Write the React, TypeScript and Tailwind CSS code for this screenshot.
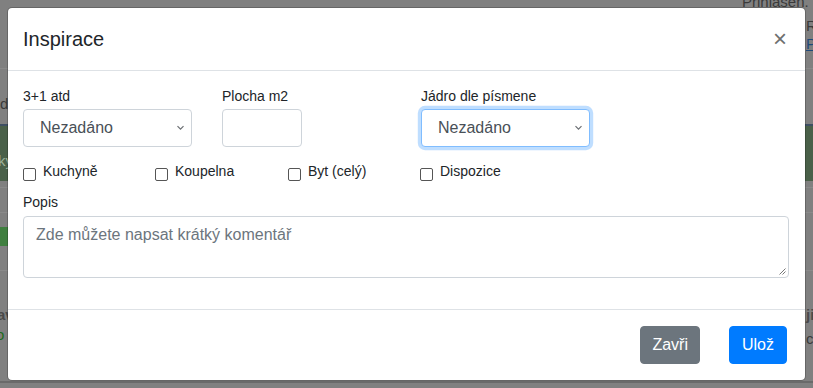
import React from "react";

function Chevron() {
  return (
    <svg width="9" height="6" viewBox="0 0 9 6" className="block">
      <polyline points="1.5,1.2 4.5,4.2 7.5,1.2" fill="none" stroke="#6b6f73" strokeWidth="1.2" />
    </svg>
  );
}

function SelectBox({ focused }: { focused?: boolean }) {
  return (
    <div
      className={
        "w-[169px] h-[38px] rounded-[4px] border bg-white flex items-center justify-between pl-[16px] pr-[6px] text-[16px] text-[#495057] " +
        (focused
          ? "border-[#80bdff] shadow-[0_0_0_3.2px_rgba(0,123,255,0.25)]"
          : "border-[#ced4da]")
      }
    >
      <span className="leading-[24px]">Nezadáno</span>
      <Chevron />
    </div>
  );
}

function Check({ label, w }: { label: string; w: string }) {
  return (
    <div className={"flex items-start " + w}>
      <div className="w-[13px] h-[13px] mt-[6px] border border-[#555] rounded-[2px] bg-white shrink-0" />
      <span className="ml-[7px] text-[14px] leading-[18px] text-[#212529]">{label}</span>
    </div>
  );
}

export default function App() {
  return (
    <div className="relative w-[813px] h-[388px] overflow-hidden bg-[#808080] font-['Liberation_Sans',Arial,sans-serif]">
      {/* dimmed page behind the backdrop */}
      <div className="absolute left-[742px] top-[-9px] text-[15px] text-[#3a3a3a]">Přihlášen.</div>
      <div className="absolute left-[806px] top-[15px] text-[15px] text-[#3a3a3a]">Ra</div>
      <div className="absolute left-[806px] top-[33px] text-[15px] text-[#1f4a7a] underline">Po</div>
      <div className="absolute left-0 top-[68px] w-full h-px bg-[#8a8a8a]" />
      <div className="absolute left-0 top-[93px] text-[15px] text-[#3a3a3a]">dr</div>
      <div className="absolute left-0 top-[124px] w-full h-[2px] bg-[#3e4f63]" />
      <div className="absolute left-0 top-[126px] w-full h-[55px] bg-[#4a6049]" />
      <div className="absolute left-[-2px] top-[150px] text-[15px] text-[#9bb29a]">ky</div>
      <div className="absolute left-0 top-[187px] w-full h-px bg-[#8a8a8a]" />
      <div className="absolute left-0 top-[212px] w-full h-px bg-[#8a8a8a]" />
      <div className="absolute left-0 top-[227px] w-[9px] h-[19px] bg-[#3f7f3f]" />
      <div className="absolute left-0 top-[270px] w-full h-px bg-[#8a8a8a]" />
      <div className="absolute left-[-3px] top-[304px] text-[15px] font-bold text-[#4a4a4a]">av</div>
      <div className="absolute left-[-4px] top-[324px] text-[15px] text-[#1d6b1d]">o</div>
      <div className="absolute left-[806px] top-[304px] text-[15px] font-bold text-[#4a4a4a]">ji</div>
      <div className="absolute left-[806px] top-[328px] text-[15px] text-[#3a3a3a]">c</div>
      <div className="absolute left-0 top-[381px] w-full h-[2px] bg-[#6a6a6a]" />

      {/* modal */}
      <div className="absolute left-[7px] top-[7px] w-[799px] rounded-[5px] border border-[rgba(0,0,0,0.2)] bg-white bg-clip-padding">
        <div className="flex items-start justify-between px-[16px] py-[16px] border-b border-[#dee2e6]">
          <h5 className="text-[20px] leading-[30px] font-medium text-[#212529] -ml-[1px]">Inspirace</h5>
          <div className="text-[24px] leading-[30px] text-[#6f6f6f] mr-[2px]">×</div>
        </div>

        <div className="px-[15px] pt-[16px] pb-[31px]">
          <div className="flex">
            <div className="w-[199px]">
              <div className="h-[22px] text-[14px] leading-[18px] text-[#212529]">3+1 atd</div>
              <SelectBox />
            </div>
            <div className="w-[199px]">
              <div className="h-[22px] text-[14px] leading-[18px] text-[#212529]">Plocha m2</div>
              <div className="w-[80px] h-[38px] rounded-[4px] border border-[#ced4da] bg-white" />
            </div>
            <div>
              <div className="h-[22px] text-[14px] leading-[18px] text-[#212529]">Jádro dle písmene</div>
              <SelectBox focused />
            </div>
          </div>

          <div className="flex mt-[15px]">
            <Check label="Kuchyně" w="w-[132px]" />
            <Check label="Koupelna" w="w-[133px]" />
            <Check label="Byt (celý)" w="w-[132px]" />
            <Check label="Dispozice" w="w-[132px]" />
          </div>

          <div className="mt-[12px]">
            <div className="h-[23px] text-[14px] leading-[18px] text-[#212529]">Popis</div>
            <div className="relative w-[766px] h-[62px] rounded-[4px] border border-[#ced4da] bg-white px-[12px] py-[6px]">
              <span className="text-[16px] leading-[24px] text-[#6c757d]">Zde můžete napsat krátký komentář</span>
              <svg width="7" height="7" viewBox="0 0 7 7" className="absolute right-[2px] bottom-[2px]">
                <line x1="6.5" y1="0.5" x2="0.5" y2="6.5" stroke="#777" strokeWidth="1" />
                <line x1="6.5" y1="3.5" x2="3.5" y2="6.5" stroke="#777" strokeWidth="1" />
              </svg>
            </div>
          </div>
        </div>

        <div className="flex justify-end items-center gap-[29px] border-t border-[#dee2e6] pt-[16px] pb-[16px] pr-[18px]">
          <button className="h-[38px] px-[11px] rounded-[4px] bg-[#6c757d] text-white text-[16px] leading-[24px] border border-[#6c757d]">
            Zavři
          </button>
          <button className="h-[38px] px-[12px] rounded-[4px] bg-[#007bff] text-white text-[16px] leading-[24px] border border-[#007bff]">
            Ulož
          </button>
        </div>
      </div>
    </div>
  );
}
